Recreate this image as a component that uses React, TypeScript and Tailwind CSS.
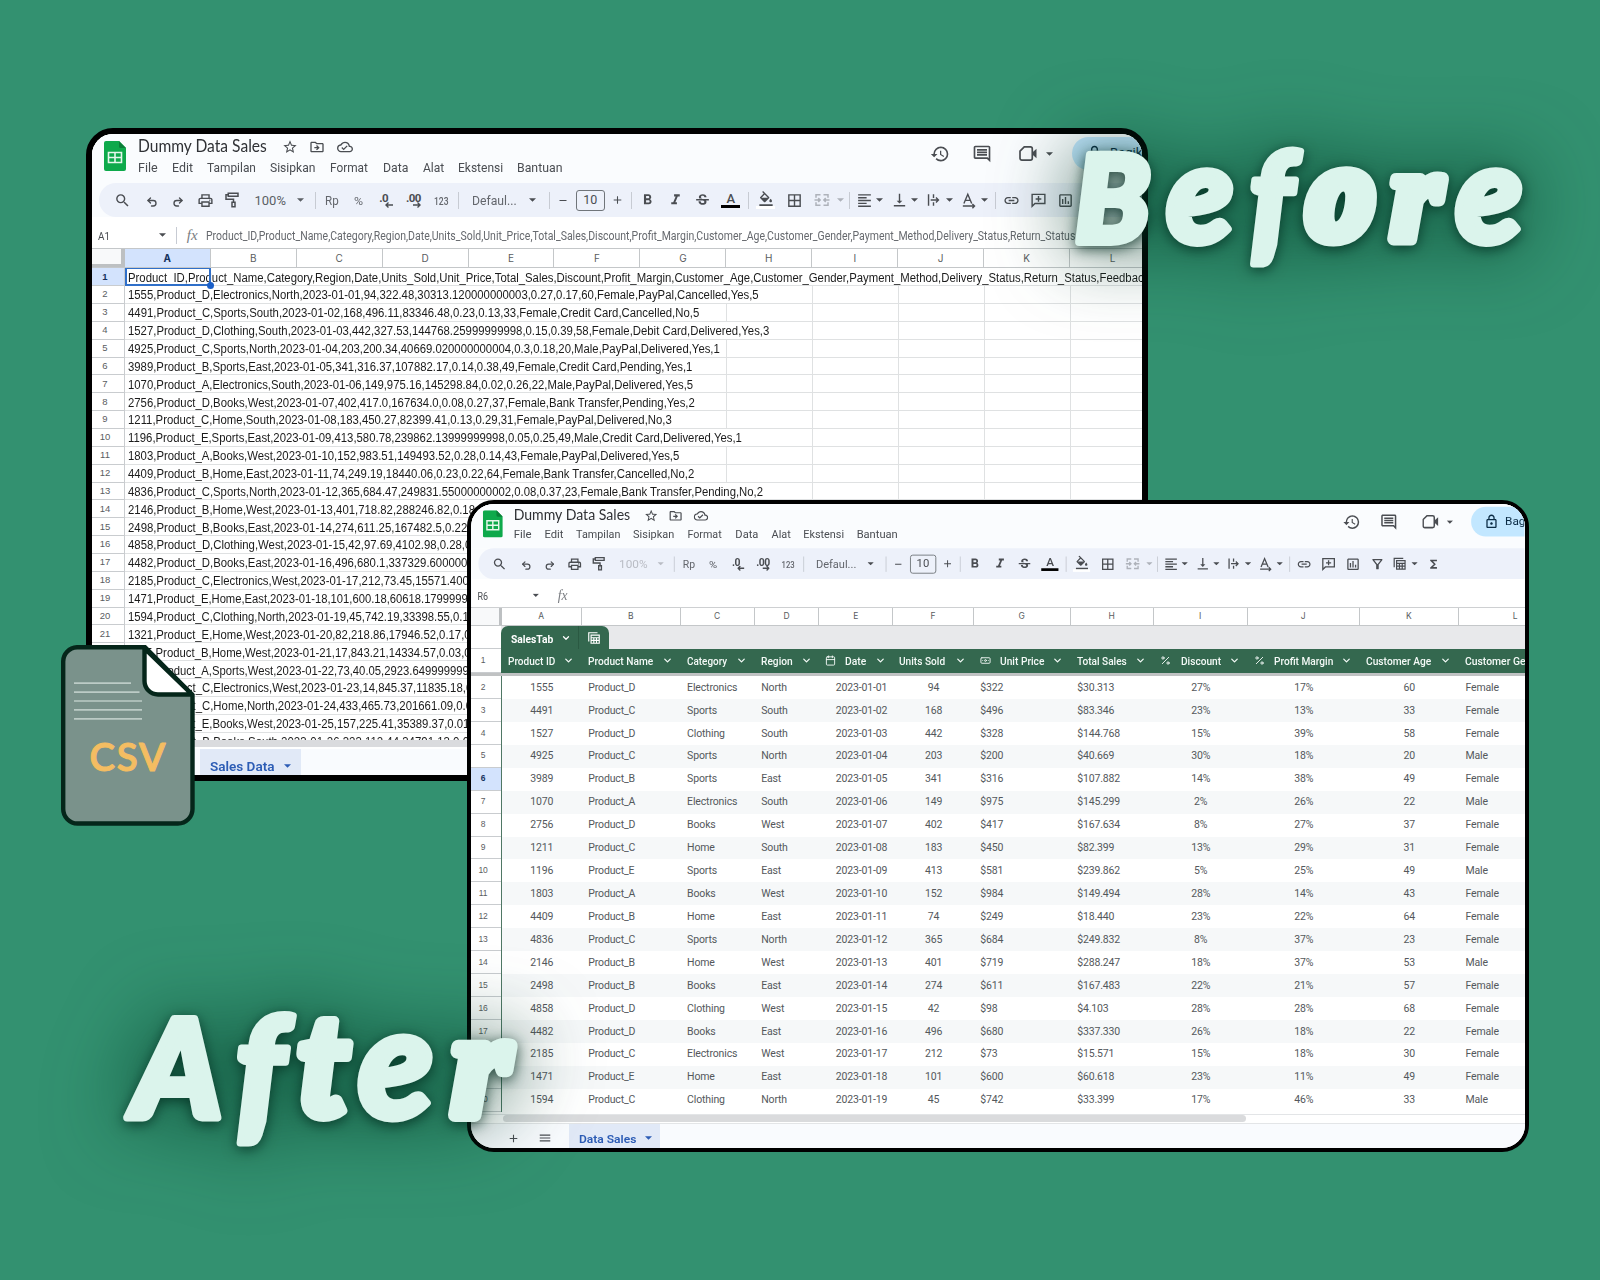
import { useLayoutEffect, useRef, useState, type ReactNode } from "react";
import {
  MdStarBorder, MdOutlineDriveFileMove, MdOutlineCloudDone, MdHistory, MdOutlineInsertComment,
  MdOutlineLock, MdSearch, MdOutlinePrint, MdFormatBold, MdFormatItalic, MdStrikethroughS,
  MdBorderAll, MdFormatAlignLeft, MdVerticalAlignBottom, MdLink, MdFormatColorFill,
  MdOutlineInsertChartOutlined, MdOutlineFilterAlt, MdFunctions, MdAdd, MdRemove, MdMenu,
} from "react-icons/md";
import { Undo2, Redo2, ChevronDown, Calendar, Percent, Banknote } from "lucide-react";

/** Text squeezed or stretched to an exact width. */
function Fit({ w, className = "", children }: { w: number; className?: string; children: string }) {
  const ref = useRef<HTMLSpanElement>(null);
  const [k, setK] = useState(1);
  useLayoutEffect(() => {
    if (ref.current) setK(w / ref.current.offsetWidth);
  }, [w, children]);
  return (
    <span className="block flex-none" style={{ width: w }}>
      <span ref={ref} className={`inline-block origin-left whitespace-pre ${className}`} style={{ transform: `scaleX(${k})` }}>
        {children}
      </span>
    </span>
  );
}

type Item = [center: number, width: number, node: ReactNode];

/** A row of items whose centres are given along one line. */
function Track({ origin = 0, items, className = "" }: { origin?: number; items: Item[]; className?: string }) {
  let end = origin;
  return (
    <div className={`flex items-center ${className}`}>
      {items.map(([c, w, node], i) => {
        const ml = c - w / 2 - end;
        end = c + w / 2;
        return (
          <div key={i} className="flex flex-none items-center justify-center" style={{ marginLeft: ml, width: w }}>
            {node}
          </div>
        );
      })}
    </div>
  );
}

const Caret = ({ className = "" }: { className?: string }) => (
  <svg viewBox="0 0 10 5" className={`h-[4px] w-[7px] fill-current ${className}`}><path d="M0 0h10L5 5z" /></svg>
);
const Sep = () => <div className="h-[17px] w-px bg-[#c7cbd3]" />;

const SheetsLogo = ({ className = "" }: { className?: string }) => (
  <svg viewBox="0 0 22 30" className={className}>
    <path d="M2 0h13l7 7v21a2 2 0 0 1-2 2H2a2 2 0 0 1-2-2V2a2 2 0 0 1 2-2z" fill="#0ea94b" />
    <path d="M15 0l7 7h-5.500A1.500 1.500 0 0 1 15 5.500z" fill="#0a7f38" />
    <path d="M4.500 11.500h13v10h-13zM4.500 16.500h13M11 11.500v10" fill="none" stroke="#e6f7ec" strokeWidth="1.600" />
  </svg>
);

const PaintRoller = () => (
  <svg viewBox="0 0 24 24" className="size-[18px]" fill="none" stroke="currentColor" strokeWidth="2">
    <path d="M7 3h13v4H7zM7 5H4v6h10v4M12 15h4v6h-4z" />
  </svg>
);
const Decimals = ({ digits, left = false }: { digits: string; left?: boolean }) => (
  <div className="flex flex-col items-end">
    <span className={`text-[11.500px] leading-[10px] font-bold tracking-[-0.6px] ${left ? "pr-[5px]" : ""}`}>{digits}</span>
    <svg viewBox="0 0 8 6" className="-mt-px h-[6px] w-[8px]" fill="none" stroke="currentColor" strokeWidth="1.400">
      <path d={left ? "M8 3H1M3.500 .5L1 3l2.500 2.500" : "M0 3h7M4.500 .5L7 3 4.500 5.500"} />
    </svg>
  </div>
);
const MergeCells = () => (
  <svg viewBox="0 0 24 24" className="size-[18px]" fill="none" stroke="currentColor" strokeWidth="2">
    <path d="M10 5H4v4M14 5h6v4M10 19H4v-4M14 19h6v-4M2 12h7M15 12h7M7 9.500l2.500 2.500L7 14.500M17 9.500L14.500 12l2.500 2.500" />
  </svg>
);
const WrapText = () => (
  <svg viewBox="0 0 24 24" className="size-[18px]" fill="none" stroke="currentColor" strokeWidth="2">
    <path d="M5 4v16M12 4v5M12 15v5M8 12h11M15.500 8.500L19 12l-3.500 3.500" />
  </svg>
);
const RotateText = () => (
  <svg viewBox="0 0 24 24" className="size-[18px]" fill="none" stroke="currentColor" strokeWidth="2">
    <path d="M5.500 17L11 4l5.500 13M7.500 12.500h7M4 20.500h16M17.500 17.500l3 3-3 3" />
  </svg>
);
const VideoCam = () => (
  <svg viewBox="0 0 20 18" className="h-[17px] w-[19px]" fill="none" stroke="currentColor" strokeWidth="1.800">
    <path d="M5.500 2H12a2 2 0 0 1 2 2v10a2 2 0 0 1-2 2H3a2 2 0 0 1-2-2V6.500z" />
    <path d="M14 8l4.500-4v10L14 10z" fill="currentColor" stroke="none" />
  </svg>
);
const TableViews = ({ className = "" }: { className?: string }) => (
  <svg viewBox="0 0 24 24" className={className} fill="none" stroke="currentColor" strokeWidth="2">
    <path d="M3 18V3h15M7 7h14v14H7zM7 11.500h14M7 16h14M11.700 11.500V21M16.300 11.500V21" />
  </svg>
);
const AddComment = () => (
  <svg viewBox="0 0 24 24" className="size-[18px]" fill="none" stroke="currentColor" strokeWidth="2">
    <path d="M3 21V4h18v13H7zM12 6.500v8M8 10.500h8" />
  </svg>
);

const MENU: [string, number, number][] = [
  ["File", 46.2, 19.3], ["Edit", 79.6, 21], ["Tampilan", 115.4, 48.6], ["Sisipkan", 178, 45.6], ["Format", 238, 38.3],
  ["Data", 290.7, 25.5], ["Alat", 330.7, 21.3], ["Ekstensi", 366, 45.3], ["Bantuan", 425.4, 45.4],
];

/** Title, menu, toolbar and formula bar of a spreadsheet window. */
function Chrome({ cell, formula, share, dimZoom = false }: { cell: string; formula?: string; share: number; dimZoom?: boolean }) {
  const t = "text-[13px] leading-none";
  const zoom = dimZoom ? "text-[#b9bcc4]" : "text-[#5b5f65]";
  const tools: Item[] = [
    [30, 18, <MdSearch className="size-[17px]" />],
    [59.6, 14, <Undo2 className="mt-1 size-[12px]" strokeWidth={2.7} />],
    [86.2, 14, <Redo2 className="mt-1 size-[12px]" strokeWidth={2.7} />],
    [113.7, 18, <MdOutlinePrint className="size-[17px]" />],
    [140.2, 18, <PaintRoller />],
    [178, 31, <Fit w={31} className={`${t} ${zoom}`}>100%</Fit>],
    [208.4, 8, <Caret className={zoom} />],
    [223.2, 1, <Sep />],
    [239.7, 13.5, <Fit w={13.5} className="text-[12px] leading-none text-[#63666c]">Rp</Fit>],
    [267, 9, <Fit w={9} className="text-[11px] leading-none text-[#63666c]">%</Fit>],
    [294.2, 15, <Decimals digits=".0" left />],
    [321.5, 15, <Decimals digits=".00" />],
    [349.6, 14.5, <Fit w={14.5} className="text-[10px] leading-none font-medium text-[#63666c]">123</Fit>],
    [367, 1, <Sep />],
    [403, 45, <Fit w={45} className="text-[13px] leading-none text-[#63666c]">Defaul...</Fit>],
    [440.5, 8, <Caret />],
    [457.4, 1, <Sep />],
    [471.3, 12, <MdRemove className="size-[13px]" />],
    [498.4, 29, <div className="flex h-[21px] w-[29px] items-center justify-center rounded-[3px] border border-[#70757a] text-[12.5px]">10</div>],
    [525.5, 13, <MdAdd className="size-[14px]" />],
    [539.4, 1, <Sep />],
    [556, 17, <MdFormatBold className="size-[18px]" />],
    [583.4, 17, <MdFormatItalic className="size-[18px]" />],
    [610.9, 17, <MdStrikethroughS className="size-[17px]" />],
    [639, 19, <div className="flex flex-col items-center"><span className="text-[13px] leading-[13px] font-medium">A</span><span className="h-[3px] w-[19px] bg-black" /></div>],
    [656.2, 1, <Sep />],
    [674, 19, <div className="flex flex-col items-center"><MdFormatColorFill className="size-[16px]" /><span className="-mt-px h-[3px] w-[19px] bg-white" /></div>],
    [703, 17, <MdBorderAll className="size-[17px]" />],
    [730.5, 17, <span className="text-[#aeb2ba]"><MergeCells /></span>],
    [748.7, 8, <Caret className="text-[#aeb2ba]" />],
    [757.3, 1, <Sep />],
    [772.3, 17, <MdFormatAlignLeft className="size-[17px]" />],
    [788, 8, <Caret />],
    [807.3, 17, <MdVerticalAlignBottom className="size-[18px]" />],
    [822.6, 8, <Caret />],
    [842, 17, <WrapText />],
    [857.6, 8, <Caret />],
    [877, 17, <RotateText />],
    [892.6, 8, <Caret />],
    [903.4, 1, <Sep />],
    [919.8, 17, <MdLink className="size-[17px]" />],
    [947, 17, <AddComment />],
    [973.7, 17, <MdOutlineInsertChartOutlined className="size-[17px]" />],
    [1000.8, 17, <MdOutlineFilterAlt className="size-[17px]" />],
    [1025.5, 17, <TableViews className="size-[16px]" />],
    [1041.4, 8, <Caret />],
    [1062.8, 15, <MdFunctions className="size-[17px]" />],
  ];
  return (
    <div className="flex h-[114.3px] flex-col bg-white text-[#4a4d52]">
      <div className="flex h-[49.3px] flex-none bg-[#fafcfe]">
        <SheetsLogo className="mt-[7px] ml-[12px] h-[30px] w-[22px] flex-none" />
        <div className="w-0 overflow-visible">
          <Track
            origin={34}
            className="h-[25px] w-[300px]"
            items={[
              [110.2, 128.4, <Fit w={128.4} className="pt-px font-['Lato'] text-[16.500px] leading-none text-[#2f3135]">Dummy Data Sales</Fit>],
              [197.7, 17, <MdStarBorder className="size-[16px]" />],
              [225, 17, <MdOutlineDriveFileMove className="size-[16px]" />],
              [252.7, 17, <MdOutlineCloudDone className="size-[16px]" />],
            ]}
          />
          <Track
            origin={34}
            className="-mt-px h-[17px] w-[500px]"
            items={MENU.map(([s, x, w]) => [x + w / 2, w, <Fit key={s} w={w} className="text-[13px] leading-none">{s}</Fit>])}
          />
        </div>
        <div className="ml-auto flex h-[33px] flex-none items-center self-start pt-[6px]">
          <MdHistory className="size-[20px]" />
          <MdOutlineInsertComment className="ml-[21.500px] size-[20px]" />
          <div className="ml-[27px]"><VideoCam /></div>
          <Caret className="ml-[8px]" />
        </div>
        <div
          className="mt-[2.500px] ml-[19.500px] flex h-[33px] flex-none items-center overflow-hidden rounded-l-full bg-[#c2e7ff] pl-[14px] text-[#0b2c45]"
          style={{ width: share }}
        >
          <MdOutlineLock className="size-[17px] flex-none" />
          <span className="ml-[7px] text-[13px]">Bagikan</span>
        </div>
      </div>
      <div className="flex h-[33.700px] flex-none bg-[#fafcfe] pl-[7px]">
        <Track origin={7} items={tools} className="flex-1 overflow-hidden rounded-l-full bg-[#edf1fa] text-[#4a4d52]" />
      </div>
      <Track
        className="h-[31.300px] pt-[5px]"
        items={[
          [11.7, 12, <Fit w={12} className="text-[11.500px] leading-none">{cell}</Fit>],
          [70.3, 8, <Caret />],
          ...(formula ? ([[84.8, 1, <Sep />]] as Item[]) : []),
          [100.2, 12, <span className="font-['Liberation_Serif'] text-[15px] leading-none text-[#7a7d82] italic">fx</span>],
          ...(formula ? ([[548.5, 869.6, <Fit w={869.6} className="text-[12px] text-[#66696e]">{formula}</Fit>]] as Item[]) : []),
        ]}
      />
    </div>
  );
}

const HEAD = "Product_ID,Product_Name,Category,Region,Date,Units_Sold,Unit_Price,Total_Sales,Discount,Profit_Margin,Customer_Age,Customer_Gender,Payment_Method,Delivery_Status,Return_Status";

/* [text, width of the text, number of columns it covers] */
const CSV: [string, number, number][] = [
  [`${HEAD},Feedback`, 1021, 13],
  ["1555,Product_D,Electronics,North,2023-01-01,94,322.48,30313.120000000003,0.27,0.17,60,Female,PayPal,Cancelled,Yes,5", 630.5, 8],
  ["4491,Product_C,Sports,South,2023-01-02,168,496.11,83346.48,0.23,0.13,33,Female,Credit Card,Cancelled,No,5", 571.5, 7],
  ["1527,Product_D,Clothing,South,2023-01-03,442,327.53,144768.25999999998,0.15,0.39,58,Female,Debit Card,Delivered,Yes,3", 641, 8],
  ["4925,Product_C,Sports,North,2023-01-04,203,200.34,40669.020000000004,0.3,0.18,20,Male,PayPal,Delivered,Yes,1", 592, 7],
  ["3989,Product_B,Sports,East,2023-01-05,341,316.37,107882.17,0.14,0.38,49,Female,Credit Card,Pending,Yes,1", 564.5, 7],
  ["1070,Product_A,Electronics,South,2023-01-06,149,975.16,145298.84,0.02,0.26,22,Male,PayPal,Delivered,Yes,5", 565.5, 7],
  ["2756,Product_D,Books,West,2023-01-07,402,417.0,167634.0,0.08,0.27,37,Female,Bank Transfer,Pending,Yes,2", 567, 7],
  ["1211,Product_C,Home,South,2023-01-08,183,450.27,82399.41,0.13,0.29,31,Female,PayPal,Delivered,No,3", 544, 7],
  ["1196,Product_E,Sports,East,2023-01-09,413,580.78,239862.13999999998,0.05,0.25,49,Male,Credit Card,Delivered,Yes,1", 614, 8],
  ["1803,Product_A,Books,West,2023-01-10,152,983.51,149493.52,0.28,0.14,43,Female,PayPal,Delivered,Yes,5", 551, 7],
  ["4409,Product_B,Home,East,2023-01-11,74,249.19,18440.06,0.23,0.22,64,Female,Bank Transfer,Cancelled,No,2", 566.5, 7],
  ["4836,Product_C,Sports,North,2023-01-12,365,684.47,249831.55000000002,0.08,0.37,23,Female,Bank Transfer,Pending,No,2", 635.5, 8],
  ["2146,Product_B,Home,West,2023-01-13,401,718.82,288246.82,0.18", 347, 7],
  ["2498,Product_B,Books,East,2023-01-14,274,611.25,167482.5,0.22", 339, 7],
  ["4858,Product_D,Clothing,West,2023-01-15,42,97.69,4102.98,0.28,0", 343.5, 7],
  ["4482,Product_D,Books,East,2023-01-16,496,680.1,337329.600000", 339.5, 7],
  ["2185,Product_C,Electronics,West,2023-01-17,212,73.45,15571.400", 341, 7],
  ["1471,Product_E,Home,East,2023-01-18,101,600.18,60618.1799999", 340, 7],
  ["1594,Product_C,Clothing,North,2023-01-19,45,742.19,33398.55,0.1", 341, 7],
  ["1321,Product_E,Home,West,2023-01-20,82,218.86,17946.52,0.17,0", 343, 7],
  ["1175,Product_B,Home,West,2023-01-21,17,843.21,14334.57,0.03,0", 343, 7],
  ["2083,Product_A,Sports,West,2023-01-22,73,40.05,2923.649999999", 341, 7],
  ["3910,Product_C,Electronics,West,2023-01-23,14,845.37,11835.18,0", 344, 7],
  ["4055,Product_C,Home,North,2023-01-24,433,465.73,201661.09,0.0", 344, 7],
  ["1727,Product_E,Books,West,2023-01-25,157,225.41,35389.37,0.01", 341, 7],
  ["3541,Product_B,Books,South,2023-01-26,323,112.44,34791.13,0.0", 341, 7],
];
const LETTERS = "ABCDEFGHIJKL".split("");

function BeforeWindow() {
  return (
    <div className="absolute top-[128px] left-[86px] flex h-[653px] w-[1062px] flex-col overflow-hidden rounded-[27px] border-6 border-black bg-white font-['Roboto',sans-serif]">
      <Chrome cell="A1" formula={HEAD} share={70} />
      <div className="flex h-[20px] w-[1200px] flex-none border-y border-[#c4c7c9] text-[10px] text-[#5a5d61]">
        <div className="w-[32.800px] flex-none border-r-4 border-b-3 border-[#bdc0c2] bg-[#f8f9fa]" />
        {LETTERS.map((l, i) => (
          <div
            key={l}
            className={`flex w-[85.950px] flex-none items-center justify-center border-r border-[#c4c7c9] font-['Inter'] ${i === 0 ? "bg-[#d3e3fd] font-bold text-[#16325c]" : ""}`}
          >
            {l}
          </div>
        ))}
      </div>
      <div className="h-[471.500px] flex-none overflow-hidden font-['Liberation_Sans',sans-serif]">
        {CSV.map(([text, w, cols], i) => (
          <div key={i} className="flex h-[17.860px] w-[1200px] text-[12.500px] text-[#1b1b1b]">
            <div
              className={`flex w-[32.800px] flex-none items-center border-r border-b border-[#c9cccf] pl-[5px] text-[9.500px] ${i === 0 ? "bg-[#d3e3fd] font-bold text-[#16325c]" : "text-[#5a5d61]"}`}
            >
              <span className="w-[16px] text-center">{i + 1}</span>
            </div>
            <div
              className="relative flex flex-none items-center border-b border-[#dfe1e2] pt-[2.500px] pl-[3px]"
              style={{ width: cols * 85.95 }}
            >
              <Fit w={w} className="leading-none">{text}</Fit>
              {i === 0 && (
                <span className="absolute top-[-1px] left-0 h-[19px] w-[86px] border-2 border-[#2f6fc9]">
                  <span className="absolute -right-[5px] -bottom-[5px] size-[7px] rounded-full bg-[#1a5fc8]" />
                </span>
              )}
            </div>
            {LETTERS.slice(cols).map((l) => (
              <div key={l} className="w-[85.950px] flex-none border-b border-l border-[#dfe1e2]" />
            ))}
          </div>
        ))}
      </div>
      <div className="h-[7.500px] flex-none bg-[#dadbde]" />
      <div className="mt-[2px] flex flex-1 bg-[#f9fbfe]">
        <div className="ml-[108px] flex w-[101px] items-center bg-[#e1e9f7] pt-[4.500px] pl-[10px] text-[#2c5cb5]">
          <Fit w={64.5} className="text-[13px] leading-none font-semibold">Sales Data</Fit>
          <Caret className="ml-[9px]" />
        </div>
      </div>
    </div>
  );
}

type Col = { name: string; w: number; align: "left" | "center" | "right"; text: number; icon?: ReactNode };
const ic = "size-[11px] flex-none";
const COLS: Col[] = [
  { name: "Product ID", w: 80.3, align: "center", text: 47.5 },
  { name: "Product Name", w: 98.8, align: "left", text: 65.5 },
  { name: "Category", w: 74.1, align: "left", text: 40.5 },
  { name: "Region", w: 64.7, align: "left", text: 31.5 },
  { name: "Date", w: 74, align: "right", text: 21.5, icon: <Calendar className={ic} /> },
  { name: "Units Sold", w: 80.3, align: "center", text: 46 },
  { name: "Unit Price", w: 97, align: "left", text: 44.5, icon: <Banknote className={ic} /> },
  { name: "Total Sales", w: 83.1, align: "left", text: 49.5 },
  { name: "Discount", w: 94, align: "center", text: 40.5, icon: <Percent className={ic} /> },
  { name: "Profit Margin", w: 111.9, align: "center", text: 59, icon: <Percent className={ic} /> },
  { name: "Customer Age", w: 99.3, align: "center", text: 65 },
  { name: "Customer Gender", w: 113.5, align: "left", text: 81 },
];

const ROWS = `1555|Product_D|Electronics|North|2023-01-01|94|$322|$30.313|27%|17%|60|Female
4491|Product_C|Sports|South|2023-01-02|168|$496|$83.346|23%|13%|33|Female
1527|Product_D|Clothing|South|2023-01-03|442|$328|$144.768|15%|39%|58|Female
4925|Product_C|Sports|North|2023-01-04|203|$200|$40.669|30%|18%|20|Male
3989|Product_B|Sports|East|2023-01-05|341|$316|$107.882|14%|38%|49|Female
1070|Product_A|Electronics|South|2023-01-06|149|$975|$145.299|2%|26%|22|Male
2756|Product_D|Books|West|2023-01-07|402|$417|$167.634|8%|27%|37|Female
1211|Product_C|Home|South|2023-01-08|183|$450|$82.399|13%|29%|31|Female
1196|Product_E|Sports|East|2023-01-09|413|$581|$239.862|5%|25%|49|Male
1803|Product_A|Books|West|2023-01-10|152|$984|$149.494|28%|14%|43|Female
4409|Product_B|Home|East|2023-01-11|74|$249|$18.440|23%|22%|64|Female
4836|Product_C|Sports|North|2023-01-12|365|$684|$249.832|8%|37%|23|Female
2146|Product_B|Home|West|2023-01-13|401|$719|$288.247|18%|37%|53|Male
2498|Product_B|Books|East|2023-01-14|274|$611|$167.483|22%|21%|57|Female
4858|Product_D|Clothing|West|2023-01-15|42|$98|$4.103|28%|28%|68|Female
4482|Product_D|Books|East|2023-01-16|496|$680|$337.330|26%|18%|22|Female
2185|Product_C|Electronics|West|2023-01-17|212|$73|$15.571|15%|18%|30|Female
1471|Product_E|Home|East|2023-01-18|101|$600|$60.618|23%|11%|49|Female
1594|Product_C|Clothing|North|2023-01-19|45|$742|$33.399|17%|46%|33|Male`
  .split("\n")
  .map((r) => r.split("|"));

const ALIGN = { left: "justify-start pl-[6.500px]", center: "justify-center", right: "justify-end pr-[6px]" };

function AfterWindow() {
  const num = "flex w-[29.500px] flex-none items-center border-b border-[#c9cccf] pl-[4px] font-['Liberation_Sans'] text-[8.500px]";
  return (
    <div className="absolute top-[499.500px] left-[467px] flex h-[652px] w-[1062px] flex-col overflow-hidden rounded-[27px] border-[4.500px] border-black bg-white font-['Roboto',sans-serif]">
      <div className="h-[103.300px] flex-none bg-[#fafcfe] pl-[0.500px]">
        <div className="w-[1163px] origin-top-left scale-[0.905]">
          <Chrome cell="R6" share={59.5} dimZoom />
        </div>
      </div>
      <div className="flex h-[19.500px] w-[1200px] flex-none border-y border-[#c4c7c9] font-['Inter'] text-[8.500px] text-[#5a5d61]">
        <div className="w-[30.500px] flex-none border-r-3 border-[#bdc0c2] bg-[#f8f9fa]" />
        {COLS.map((c, i) => (
          <div key={c.name} className="flex flex-none items-center justify-center border-r border-[#c4c7c9]" style={{ width: c.w }}>
            {LETTERS[i]}
          </div>
        ))}
      </div>
      <div className="flex h-[22.500px] w-[1200px] flex-none bg-[#e8e9eb]">
        <div className="w-[29.500px] border-b border-[#c9cccf] bg-white" />
        <div className="flex w-[108.500px] items-center rounded-t-[7px] bg-[#34684f] text-white">
          <div className="flex h-full w-[78.500px] items-center border-r border-[#2a5942] pl-[10px]">
            <Fit w={42} className="text-[11px] leading-none font-bold">SalesTab</Fit>
            <ChevronDown className="ml-[8px] size-[10px]" strokeWidth={3} />
          </div>
          <TableViews className="ml-[8px] size-[14px]" />
        </div>
      </div>
      <div className="flex h-[24px] w-[1200px] flex-none">
        <div className={`${num} text-[#5a5d61]`}><span className="w-[16px] text-center">1</span></div>
        <div className="flex bg-[#34684f] pb-[2px] text-[#f4faf7]">
          {COLS.map((c) => (
            <div key={c.name} className="flex flex-none items-center pr-[6.500px] pl-[7px]" style={{ width: c.w }}>
              {c.icon && <span className="mt-[2px] mr-[8px]">{c.icon}</span>}
              <span className={c.icon ? "ml-auto" : ""}>
                <Fit w={c.text} className="text-[11px] leading-none font-medium">{c.name}</Fit>
              </span>
              <ChevronDown className={`mt-px size-[11px] flex-none ${c.icon ? "ml-[8px]" : "ml-auto"}`} strokeWidth={2.8} />
            </div>
          ))}
        </div>
      </div>
      <div className="h-[3.300px] flex-none bg-[#c0c2c3]" />
      {ROWS.map((r, i) => (
        <div key={i} className="flex h-[22.930px] w-[1200px] flex-none text-[10.500px] tracking-[-0.14px] text-[#54585c]">
          <div className={`${num} ${i === 4 ? "bg-[#d3e3fd] font-bold text-[#16325c]" : "text-[#5a5d61]"}`}>
            <span className="w-[16px] text-center">{i + 2}</span>
          </div>
          <div className={`flex border-l border-[#4f7765] ${i % 2 ? "bg-[#f6f8f9]" : "bg-white"}`}>
            {r.map((v, j) => (
              <div key={j} className={`flex flex-none items-center ${ALIGN[COLS[j].align]}`} style={{ width: COLS[j].w }}>
                {v}
              </div>
            ))}
          </div>
        </div>
      ))}
      <div className="mt-[2px] flex h-[10.500px] flex-none border-y border-[#e3e5e7] pl-[32px]">
        <div className="h-[7px] w-[743px] rounded-full bg-[#dadbdd]" />
      </div>
      <div className="flex flex-1 items-stretch bg-[#f9fbfe] text-[#4a4d52]">
        <div className="flex w-[97.500px] items-center gap-[18px] pt-[3px] pl-[36px]">
          <MdAdd className="size-[13px]" />
          <MdMenu className="size-[14px]" />
        </div>
        <div className="flex w-[91px] items-center bg-[#e1e9f7] pt-[1.500px] pl-[10px] text-[#2c5cb5]">
          <Fit w={57.5} className="text-[11.500px] leading-none font-semibold">Data Sales</Fit>
          <Caret className="ml-[9px]" />
        </div>
      </div>
    </div>
  );
}

function CsvFile() {
  return (
    <svg viewBox="0 0 134 181" className="absolute top-[645px] left-[61px] h-[181px] w-[134px]">
      <path d="M16 2.200H84L131.500 50V164a14.500 14.500 0 0 1-14.500 14.500H16.500A14.500 14.500 0 0 1 2.200 164V17A14.500 14.500 0 0 1 16 2.200z" fill="#7a928b" stroke="#05261a" strokeWidth="4.400" />
      <path d="M83.500 3.500V36a13.500 13.500 0 0 0 13.500 13.500H131z" fill="#fff" stroke="#05261a" strokeWidth="4.400" strokeLinejoin="round" />
      <path d="M13 38.200h57M13 47.200h65.500M13 56h68M13 64.800h68M13 73.800h68" stroke="#bccbc6" strokeWidth="1.700" />
      <text x="28.500" y="126" textLength="76" fill="#f4bd62" stroke="#f4bd62" strokeWidth="1" strokeLinejoin="round" fontFamily="Lato, sans-serif" fontWeight="600" fontSize="38.500">CSV</text>
    </svg>
  );
}

type Glyph = { c: string; x: number; y?: number; size: number; stroke?: number; font?: string };
const SERIF = "'Liberation Serif', serif";
const WIDE = "'Open Sans', sans-serif";

/** Rounded display lettering with a soft glow of shade behind it. */
function Lettering({ glyphs, baseline, className }: { glyphs: Glyph[]; baseline: number; className: string }) {
  return (
    <svg className={`overflow-visible drop-shadow-[0_0_40px_rgba(0,60,40,0.80)] ${className}`}>
      <g className="drop-shadow-[0_3px_7px_rgba(0,40,28,0.75)]">
        <text fill="#dbf4ec" stroke="#dbf4ec" strokeLinejoin="round" fontWeight="900" fontStyle="italic">
          {glyphs.map((g, i) => (
            <tspan
              key={i}
              x={g.x}
              y={g.y ?? baseline}
              fontSize={g.size}
              strokeWidth={g.stroke ?? 7}
              fontFamily={g.font ?? "Lato, sans-serif"}
            >
              {g.c}
            </tspan>
          ))}
        </text>
      </g>
    </svg>
  );
}

export default function App() {
  return (
    <div className="relative h-[1280px] w-[1600px] overflow-hidden bg-[#339170]">
      <BeforeWindow />
      <AfterWindow />
      <CsvFile />
      <Lettering
        className="absolute top-[140px] left-[1060px] h-[140px] w-[480px]"
        baseline={101.5}
        glyphs={[
          { c: "B", x: 15, size: 121, stroke: 8 }, { c: "e", x: 107, size: 135, stroke: 8 }, { c: "f", x: 189, y: 107.5, size: 132 },
          { c: "o", x: 241, size: 128, font: WIDE }, { c: "r", x: 331, size: 130, stroke: 13, font: SERIF, y: 98.5 }, { c: "e", x: 396, size: 135, stroke: 8 },
        ]}
      />
      <Lettering
        className="absolute top-[1005px] left-[110px] h-[150px] w-[430px]"
        baseline={113}
        glyphs={[
          { c: "A", x: 23, size: 135, stroke: 8 }, { c: "f", x: 125, y: 120, size: 149 }, { c: "t", x: 187, size: 142, stroke: 10, y: 111 },
          { c: "e", x: 248, size: 154 }, { c: "r", x: 342, size: 148, stroke: 14, font: SERIF, y: 109.5 },
        ]}
      />
    </div>
  );
}
